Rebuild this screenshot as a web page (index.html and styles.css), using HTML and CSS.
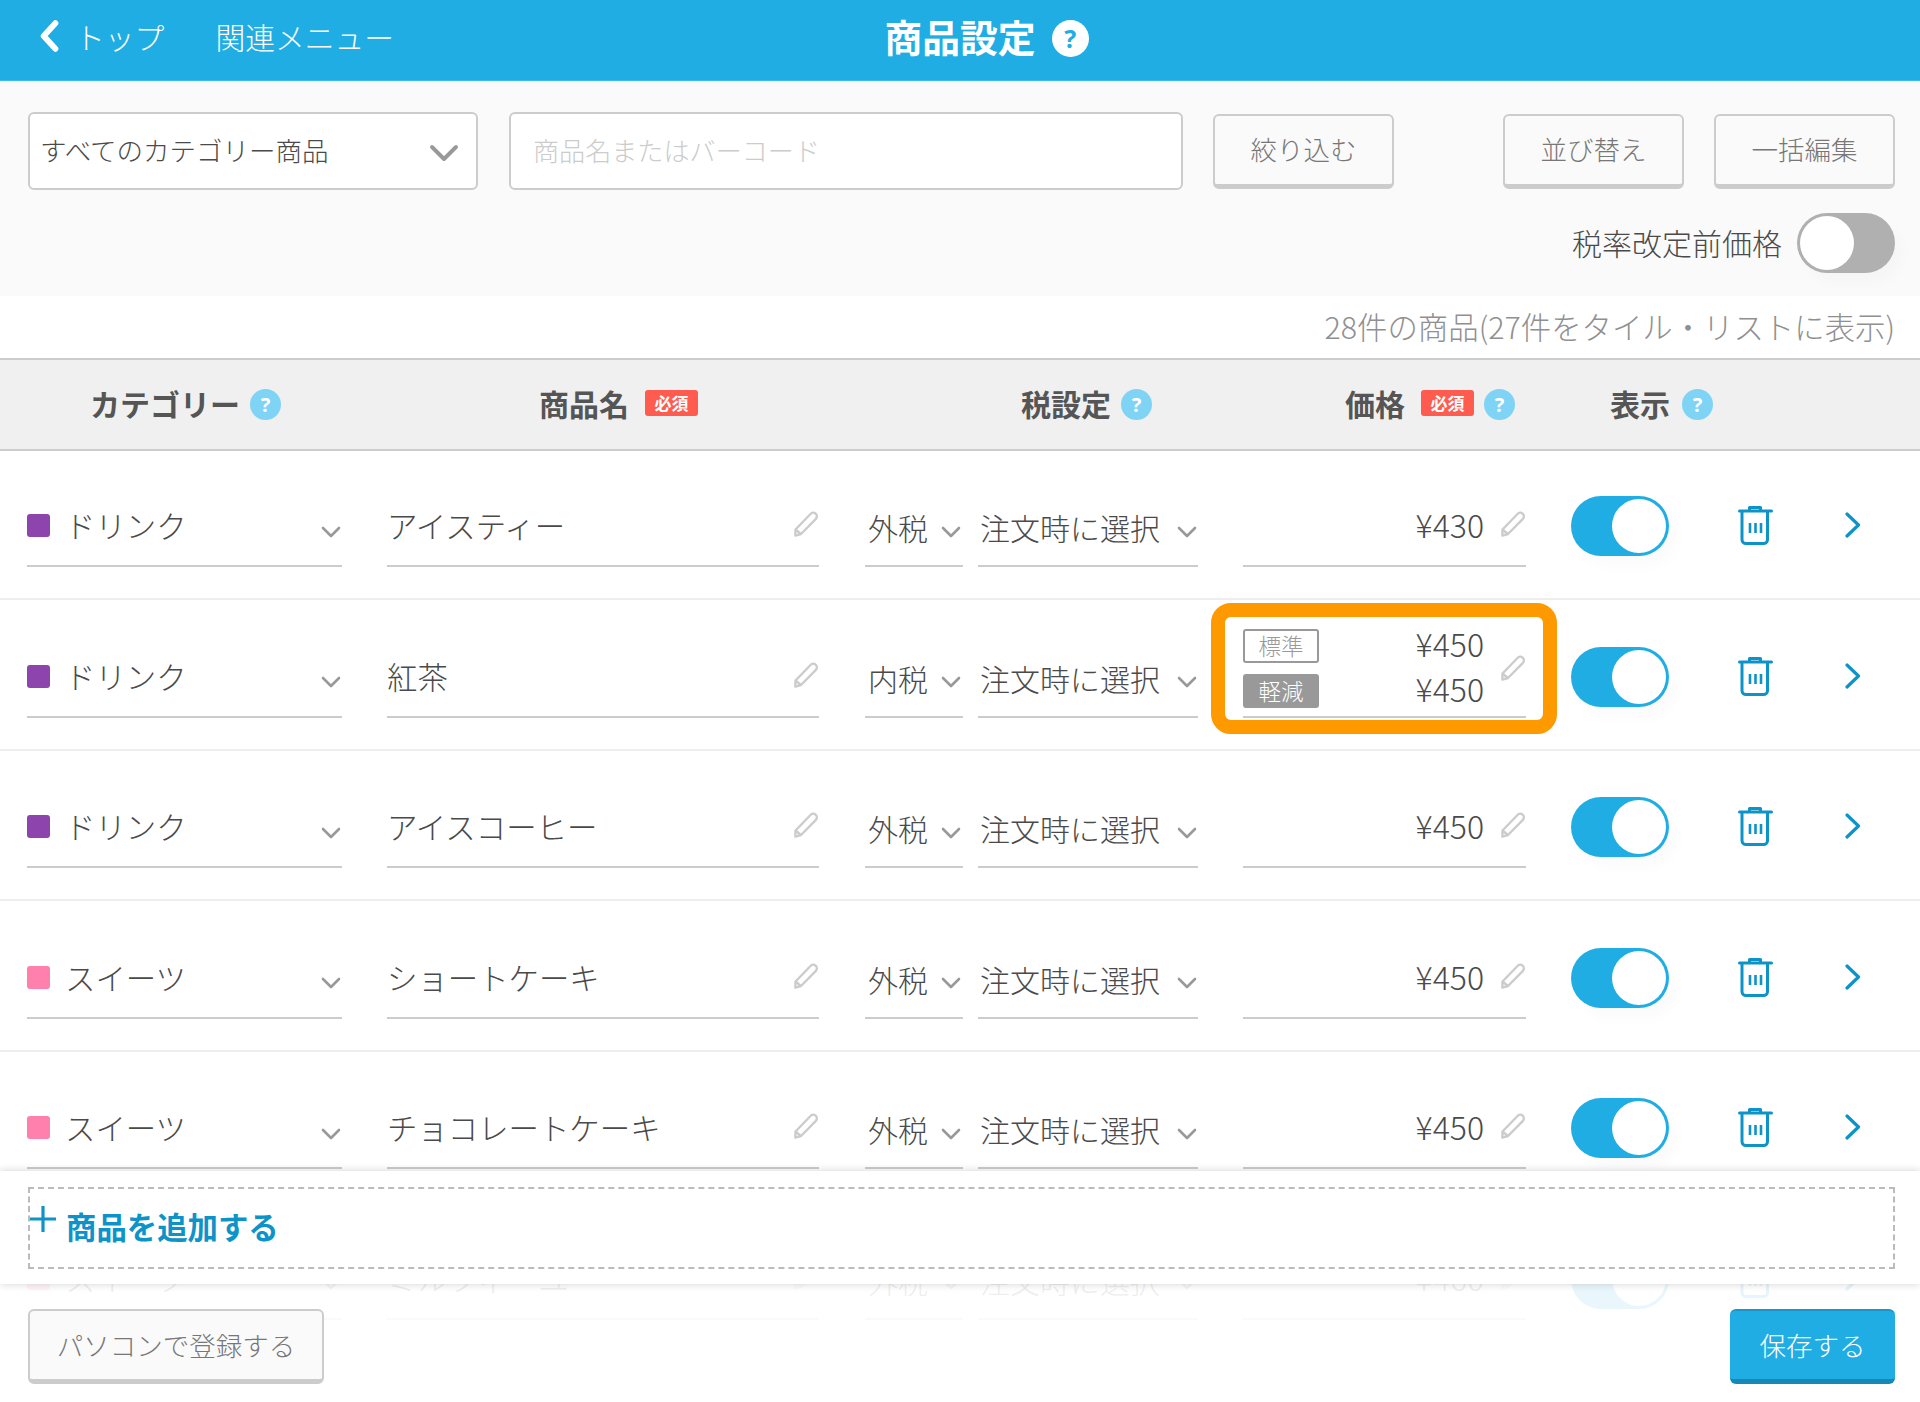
FILE: index.html
```html
<!DOCTYPE html>
<html lang="ja">
<head>
<meta charset="utf-8">
<title>商品設定</title>
<link rel="stylesheet" href="styles.css">
</head>
<body>
<svg class="sprite" width="0" height="0" aria-hidden="true">
  <symbol id="i-down" viewBox="0 0 20 12"><path d="M2 2l8 8 8-8" fill="none" stroke="currentColor" stroke-width="2.6" stroke-linecap="round" stroke-linejoin="round"/></symbol>
  <symbol id="i-pencil" viewBox="0 0 26 26"><path d="M2.5 18.5L17.5 3a3.6 3.6 0 0 1 5.4 4.8L8 23l-5.600 1.600zM2.800 18.600L7.800 23" fill="none" stroke="currentColor" stroke-width="2.400" stroke-linecap="round" stroke-linejoin="round"/></symbol>
  <symbol id="i-trash" viewBox="0 0 35 39"><g fill="none" stroke="currentColor" stroke-width="3" stroke-linecap="round" stroke-linejoin="round"><path d="M1.5 5h32M11.5 4V1.5h11V4M4 6v27.500a4 4 0 0 0 4 4h17.500a4 4 0 0 0 4-4V6"/><path d="M12 17v10M17.500 17v10M23 17v10" stroke-width="2.600" stroke-linecap="butt"/></g></symbol>
  <symbol id="i-next" viewBox="0 0 16 26"><path d="M2 2l11.500 11L2 24" fill="none" stroke="currentColor" stroke-width="3.200" stroke-linecap="round" stroke-linejoin="round"/></symbol>
</svg>
<div class="page">
  <header class="topbar">
    <nav class="topnav">
      <svg class="back" viewBox="0 0 20 30"><path d="M16 3L5 15l11 12" fill="none" stroke="currentColor" stroke-width="5.500" stroke-linecap="round" stroke-linejoin="round"/></svg>
      <a class="toplink toplink-top">トップ</a>
      <a class="toplink">関連メニュー</a>
    </nav>
    <h1 class="title">商品設定</h1>
    <div class="title-help"><span class="help help-white">?</span></div>
  </header>

  <section class="toolbar">
    <div class="toolbar-row">
      <div class="field select-field"><span class="field-text">すべてのカテゴリー商品</span><svg class="big-down"><use href="#i-down"/></svg></div>
      <div class="field search-field"><span class="search-text">商品名またはバーコード</span></div>
      <button class="btn filter-btn">絞り込む</button>
      <button class="btn sort-btn">並び替え</button>
      <button class="btn bulk-btn">一括編集</button>
    </div>
    <div class="toolbar-row toolbar-tax">
      <span class="tax-label">税率改定前価格</span>
      <span class="toggle toggle-off"><span class="knob"></span></span>
    </div>
  </section>

  <div class="count">28件の商品(27件をタイル・リストに表示)</div>

  <div class="thead">
    <div class="th th-cat">カテゴリー<span class="help">?</span></div>
    <div class="th th-name">商品名<span class="req">必須</span></div>
    <div class="th th-tax">税設定<span class="help">?</span></div>
    <div class="th th-price">価格<span class="req">必須</span><span class="help help-near">?</span></div>
    <div class="th th-show">表示<span class="help">?</span></div>
  </div>

  <div class="rows">
    <div class="row">
      <div class="cell c-cat"><i class="swatch purple"></i><span class="grow">ドリンク</span><svg class="down"><use href="#i-down"/></svg></div>
      <div class="cell c-name"><span class="grow">アイスティー</span><svg class="pencil"><use href="#i-pencil"/></svg></div>
      <div class="cell c-tax"><span class="grow">外税</span><svg class="down"><use href="#i-down"/></svg></div>
      <div class="cell c-order"><span class="grow">注文時に選択</span><svg class="down"><use href="#i-down"/></svg></div>
      <div class="cell c-price"><span class="grow amount">¥430</span><svg class="pencil"><use href="#i-pencil"/></svg></div>
      <span class="toggle"><span class="knob"></span></span>
      <svg class="trash"><use href="#i-trash"/></svg>
      <svg class="next"><use href="#i-next"/></svg>
    </div>
    <div class="row">
      <div class="cell c-cat"><i class="swatch purple"></i><span class="grow">ドリンク</span><svg class="down"><use href="#i-down"/></svg></div>
      <div class="cell c-name"><span class="grow">紅茶</span><svg class="pencil"><use href="#i-pencil"/></svg></div>
      <div class="cell c-tax"><span class="grow">内税</span><svg class="down"><use href="#i-down"/></svg></div>
      <div class="cell c-order"><span class="grow">注文時に選択</span><svg class="down"><use href="#i-down"/></svg></div>
      <div class="cell c-price c-price-double">
        <div class="tag-rows">
          <div class="tag-row"><span class="tag">標準</span><span class="amount">¥450</span></div>
          <div class="tag-row"><span class="tag tag-solid">軽減</span><span class="amount">¥450</span></div>
        </div>
        <svg class="pencil pencil-mid"><use href="#i-pencil"/></svg>
        <div class="highlight"></div>
      </div>
      <span class="toggle"><span class="knob"></span></span>
      <svg class="trash"><use href="#i-trash"/></svg>
      <svg class="next"><use href="#i-next"/></svg>
    </div>
    <div class="row">
      <div class="cell c-cat"><i class="swatch purple"></i><span class="grow">ドリンク</span><svg class="down"><use href="#i-down"/></svg></div>
      <div class="cell c-name"><span class="grow">アイスコーヒー</span><svg class="pencil"><use href="#i-pencil"/></svg></div>
      <div class="cell c-tax"><span class="grow">外税</span><svg class="down"><use href="#i-down"/></svg></div>
      <div class="cell c-order"><span class="grow">注文時に選択</span><svg class="down"><use href="#i-down"/></svg></div>
      <div class="cell c-price"><span class="grow amount">¥450</span><svg class="pencil"><use href="#i-pencil"/></svg></div>
      <span class="toggle"><span class="knob"></span></span>
      <svg class="trash"><use href="#i-trash"/></svg>
      <svg class="next"><use href="#i-next"/></svg>
    </div>
    <div class="row">
      <div class="cell c-cat"><i class="swatch pink"></i><span class="grow">スイーツ</span><svg class="down"><use href="#i-down"/></svg></div>
      <div class="cell c-name"><span class="grow">ショートケーキ</span><svg class="pencil"><use href="#i-pencil"/></svg></div>
      <div class="cell c-tax"><span class="grow">外税</span><svg class="down"><use href="#i-down"/></svg></div>
      <div class="cell c-order"><span class="grow">注文時に選択</span><svg class="down"><use href="#i-down"/></svg></div>
      <div class="cell c-price"><span class="grow amount">¥450</span><svg class="pencil"><use href="#i-pencil"/></svg></div>
      <span class="toggle"><span class="knob"></span></span>
      <svg class="trash"><use href="#i-trash"/></svg>
      <svg class="next"><use href="#i-next"/></svg>
    </div>
    <div class="row">
      <div class="cell c-cat"><i class="swatch pink"></i><span class="grow">スイーツ</span><svg class="down"><use href="#i-down"/></svg></div>
      <div class="cell c-name"><span class="grow">チョコレートケーキ</span><svg class="pencil"><use href="#i-pencil"/></svg></div>
      <div class="cell c-tax"><span class="grow">外税</span><svg class="down"><use href="#i-down"/></svg></div>
      <div class="cell c-order"><span class="grow">注文時に選択</span><svg class="down"><use href="#i-down"/></svg></div>
      <div class="cell c-price"><span class="grow amount">¥450</span><svg class="pencil"><use href="#i-pencil"/></svg></div>
      <span class="toggle"><span class="knob"></span></span>
      <svg class="trash"><use href="#i-trash"/></svg>
      <svg class="next"><use href="#i-next"/></svg>
    </div>
    <div class="row">
      <div class="cell c-cat"><i class="swatch pink"></i><span class="grow">スイーツ</span><svg class="down"><use href="#i-down"/></svg></div>
      <div class="cell c-name"><span class="grow">ミルフィーユ</span><svg class="pencil"><use href="#i-pencil"/></svg></div>
      <div class="cell c-tax"><span class="grow">外税</span><svg class="down"><use href="#i-down"/></svg></div>
      <div class="cell c-order"><span class="grow">注文時に選択</span><svg class="down"><use href="#i-down"/></svg></div>
      <div class="cell c-price"><span class="grow amount">¥460</span><svg class="pencil"><use href="#i-pencil"/></svg></div>
      <span class="toggle"><span class="knob"></span></span>
      <svg class="trash"><use href="#i-trash"/></svg>
      <svg class="next"><use href="#i-next"/></svg>
    </div>
  </div>

  <div class="dock">
    <div class="add-panel">
      <div class="add-box">
        <svg class="plus" viewBox="0 0 26 26"><path d="M13 0v26M0 13h26" fill="none" stroke="currentColor" stroke-width="3.200"/></svg>
        <span class="add-text">商品を追加する</span>
      </div>
    </div>
    <div class="foot">
      <button class="btn pc-btn">パソコンで登録する</button>
      <button class="btn save-btn">保存する</button>
    </div>
  </div>
</div>
</body>
</html>
```

FILE: styles.css
```css
* { box-sizing: border-box; }
html, body { margin: 0; padding: 0; }
body {
  font-family: "Noto Sans CJK JP", "Noto Sans", sans-serif;
  font-weight: 300;
  color: #4a4a4a;
  background: #fff;
}
.sprite { position: absolute; }
.page {
  position: relative;
  width: 1920px;
  height: 1402px;
  overflow: hidden;
  display: flex;
  flex-direction: column;
}

/* top bar */
.topbar {
  flex: none;
  height: 81px;
  padding-bottom: 8px;
  background: #20ade4;
  border-bottom: 1px solid #3bbcf0;
  color: #fff;
  display: grid;
  grid-template-columns: 1fr auto 1fr;
  align-items: center;
}
.topnav { display: flex; align-items: center; padding-left: 38px; }
.back { width: 22px; height: 32px; flex: none; color: #fff; margin-right: 15px; }
.toplink { font-size: 29.800px; line-height: 40px; color: #fff; margin-bottom: 1px; }
.toplink-top { margin-right: 51px; }
.title { margin: 0; font-size: 37.800px; font-weight: 700; line-height: 60px; color: #fff; }
.title-help { padding-left: 16px; display: flex; margin-top: 4px; }

.help {
  display: inline-flex;
  flex: none;
  align-items: center;
  justify-content: center;
  width: 31px;
  height: 31px;
  margin-left: 10px;
  border-radius: 50%;
  background: #7fd3f5;
  color: #fff;
  font-family: "Noto Sans", sans-serif;
  font-size: 20px;
  font-weight: 700;
  line-height: 1;
}
.help-white {
  width: 37px;
  height: 37px;
  margin: 0;
  background: #fff;
  color: #20ade4;
  font-size: 25px;
}

/* toolbar */
.toolbar {
  flex: none;
  height: 215px;
  background: #fafafa;
  padding: 31px 25px 0 28px;
  display: flex;
  flex-direction: column;
  gap: 23px;
}
.toolbar-row { display: flex; align-items: center; height: 78px; }
.toolbar-tax { justify-content: flex-end; height: 60px; }
.field {
  height: 78px;
  background: #fff;
  border: 2px solid #ccc;
  border-radius: 6px;
  font-size: 26.500px;
  display: flex;
  align-items: center;
}
.select-field { width: 450px; padding: 0 17px 0 10px; justify-content: space-between; color: #4a4a4a; }
.field-text { margin-bottom: 4px; }
.search-text { margin-bottom: 2px; font-size: 26.100px; }
.big-down { width: 30px; height: 18px; color: #999; margin-top: 3px; }
.search-field { width: 674px; margin-left: 31px; padding-left: 22px; color: #ccc; }
.btn {
  font: inherit;
  height: 75px;
  font-size: 26.500px;
  color: #777;
  background: #fafafa;
  border: 2px solid #ccc;
  border-bottom-width: 5px;
  border-radius: 6px;
  padding: 0 0 2px;
}
.filter-btn { width: 181px; margin-left: 30px; }
.sort-btn { width: 181px; margin-left: auto; }
.bulk-btn { width: 181px; margin-left: 30px; }
.tax-label { font-size: 30px; margin: 0 15px 2px 0; color: #4a4a4a; }

/* toggles */
.toggle {
  position: relative;
  display: block;
  flex: none;
  width: 98px;
  height: 60px;
  border-radius: 30px;
  background: #20ade4;
  box-shadow: 8px 10px 14px rgba(0,0,0,.02);
}
.knob {
  position: absolute;
  top: 3px;
  right: 3px;
  width: 54px;
  height: 54px;
  border-radius: 50%;
  background: #fff;
}
.toggle-off { background: #b0b0b0; }
.toggle-off .knob { right: auto; left: 3px; }

.count {
  flex: none;
  height: 62px;
  padding: 0 25px 0 0;
  text-align: right;
  font-size: 30.400px;
  line-height: 60px;
  color: #909090;
}

/* table head */
.thead {
  flex: none;
  height: 93px;
  background: #f0f0f0;
  border-top: 2px solid #ccc;
  border-bottom: 2px solid #ccc;
  display: flex;
  align-items: center;
  position: relative;
}
.th { display: flex; align-items: center; font-size: 30px; font-weight: 700; color: #555; margin-top: -3px; }
.th .help { margin-top: 3px; }
.th-cat { margin-left: 90px; }
.th-name { margin-left: 258px; }
.th-tax { margin-left: 323px; }
.th-price { margin-left: 193px; }
.th-show { margin-left: 95px; }
.th-show .help { margin-left: 12px; }
.req {
  display: inline-block;
  margin-left: 16px;
  width: 53px;
  height: 26px;
  border-radius: 3px;
  background: #ff5b4f;
  color: #fff;
  font-size: 17px;
  font-weight: 700;
  line-height: 26px;
  text-align: center;
}

/* rows */
.rows { flex: 1; min-height: 0; }
.row {
  height: 150.600px;
  padding: 0 0 31px 27px;
  border-bottom: 2px solid #eee;
  display: flex;
  align-items: flex-end;
}
.row:first-child { height: 149px; }
.cell {
  position: relative;
  flex: none;
  height: 66px;
  padding-bottom: 12px;
  border-bottom: 2px solid #ccc;
  display: flex;
  align-items: center;
  font-size: 30.400px;
  color: #4a4a4a;
}
.grow { flex: 1; white-space: nowrap; line-height: 40px; margin-top: -4px; }
.c-cat { width: 315px; padding-right: 1px; }
.c-name { width: 432px; margin-left: 45px; }
.c-tax { width: 98px; margin-left: 46px; padding-left: 3px; padding-right: 2px; font-size: 30px; }
.c-order { width: 220px; margin-left: 15px; padding-left: 2px; padding-right: 1px; font-size: 30px; }
.c-tax .grow, .c-order .grow { margin-top: 0; }
.c-price { width: 283px; margin-left: 45px; }
.amount { text-align: right; padding: 0 16px 3px 0; font-size: 32px; line-height: 40px; margin-top: -3px; }
.swatch { flex: none; width: 23px; height: 23px; border-radius: 3px; margin: -3px 15px 0 0; }
.purple { background: #8e44ad; }
.pink { background: #ff80ac; }
.down { flex: none; width: 20px; height: 12px; color: #999; margin-top: 9px; }
.pencil { flex: none; width: 26px; height: 26px; color: #ccc; margin-top: -6px; }
.pencil-mid { margin-top: 0; }
.c-price-double { height: 89px; padding-bottom: 8px; }
.tag-rows { flex: 1; display: flex; flex-direction: column; gap: 11px; margin-top: 1px; }
.tag-row { display: flex; align-items: center; justify-content: space-between; height: 34px; }
.tag {
  width: 76px;
  height: 34px;
  border: 2px solid #999;
  border-radius: 3px;
  color: #999;
  font-size: 22.500px;
  line-height: 28px;
  text-align: center;
}
.tag-solid { background: #999; color: #fff; }
.highlight {
  position: absolute;
  left: -32px;
  right: -31px;
  top: -26px;
  bottom: -18px;
  border: 14px solid #ff9900;
  border-radius: 20px;
}
.row > .toggle { margin: 0 0 11px 45px; }
.trash { flex: none; width: 35px; height: 39px; margin: 0 0 22px 69px; color: #0e93c9; }
.next { flex: none; width: 16px; height: 26px; margin: 0 0 29px 72px; color: #0e93c9; }

/* dock over the list */
.dock { position: absolute; left: 0; right: 0; bottom: 0; height: 231px; display: flex; flex-direction: column; }
.add-panel {
  flex: none;
  height: 113px;
  padding: 16px 25px 15px 28px;
  background: #fff;
  box-shadow: 0 0 8px rgba(0,0,0,.18);
  position: relative;
}
.add-box {
  height: 82px;
  border: 2px dashed #bbb;
  display: flex;
  align-items: center;
  color: #0e93c9;
}
.plus { flex: none; width: 26px; height: 26px; margin: -18px 10px 0 0; }
.add-text { font-size: 30.400px; font-weight: 700; color: #0e93c9; margin-bottom: 4px; }
.foot {
  flex: 1;
  background: rgba(255,255,255,.9);
  padding: 25px 25px 0 28px;
  display: flex;
  align-items: flex-start;
  justify-content: space-between;
}
.pc-btn { width: 296px; }
.save-btn {
  width: 165px;
  background: #20ade4;
  color: #fff;
  border: 0;
  border-top: 2px solid #1a96c8;
  border-bottom: 5px solid #1787b5;
}
```
